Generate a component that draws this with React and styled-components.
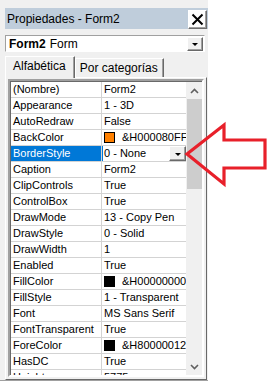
import styled, { createGlobalStyle } from 'styled-components'

const Global = createGlobalStyle`
  html, body { margin: 0; background: #fff; }
  body { font-family: "Liberation Sans", Arial, sans-serif; }
`

const Page = styled.div`
  position: relative;
  width: 274px;
  height: 382px;
  overflow: hidden;
`

const Window = styled.div`
  width: 208px;
  height: 381px;
  box-sizing: border-box;
  padding: 8px 0 0 5px;
  background: #f0f0f0;
  border-bottom: 1px solid #a0a0a0;
  display: flex;
  flex-direction: column;
`

const TitleBar = styled.div`
  flex: none;
  height: 21px;
  background: #bfcddb;
  display: flex;
  align-items: center;
  justify-content: space-between;
  padding-left: 2px;
  font-size: 12px;
  color: #000;
`

const CloseButton = styled.div`
  width: 19px;
  height: 19px;
  margin: 2px 1px 0 0;
  box-sizing: border-box;
  background: #fdfdfd;
  border: 1px solid;
  border-color: #fff #6d6d6d #6d6d6d #fff;
  box-shadow: inset -1px -1px 0 #a0a0a0;
  display: flex;
  align-items: center;
  justify-content: center;
`

const Combo = styled.div`
  flex: none;
  margin-top: 6px;
  width: 200px;
  height: 17px;
  box-sizing: border-box;
  background: #fff;
  border: 1px solid;
  border-color: #a0a0a0 #fff #fff #a0a0a0;
  display: flex;
  align-items: center;
  padding-left: 3px;
  font-size: 12px;
  b { margin-right: 4px; }
`

const ComboText = styled.span`
  flex: 1;
`

const DropButton = styled.div`
  width: 16px;
  height: 14px;
  margin-right: 1px;
  box-sizing: border-box;
  background: #f0f0f0;
  border: 1px solid;
  border-color: #fff #696969 #696969 #fff;
  box-shadow: inset -1px -1px 0 #a0a0a0;
  display: flex;
  align-items: center;
  justify-content: center;
  &::after {
    content: '';
    border-left: 3px solid transparent;
    border-right: 3px solid transparent;
    border-top: 3px solid #000;
    margin-top: 2px;
  }
`

const Tabs = styled.div`
  flex: none;
  margin-top: 3px;
  height: 22px;
  display: flex;
  align-items: flex-end;
  font-size: 12px;
`

const Tab = styled.div`
  box-sizing: border-box;
  height: ${p => (p.$active ? '22px' : '19px')};
  padding: ${p => (p.$active ? '0 8px 3px 7px' : '0 5px 0 4px')};
  display: flex;
  align-items: center;
  border: 1px solid;
  border-bottom: none;
  border-color: #fff #696969 transparent #fff;
  box-shadow: inset -1px 0 0 #a0a0a0;
  background: #f0f0f0;
  position: relative;
  z-index: ${p => (p.$active ? 1 : 0)};
  margin-bottom: ${p => (p.$active ? '-1px' : '0')};
`

const TabPage = styled.div`
  flex: 1;
  min-height: 0;
  width: 202px;
  box-sizing: border-box;
  border: 1px solid;
  border-color: #fff #696969 #696969 #fff;
  padding: 1px 2px 2px 2px;
  display: flex;
`

const Grid = styled.div`
  flex: 1;
  min-height: 0;
  display: flex;
  border: 2px solid;
  border-color: #a0a0a0 #fff #fff #a0a0a0;
  box-shadow: inset 1px 1px 0 #696969;
  padding: 1px 0 0 1px;
  overflow: hidden;
`

const Rows = styled.div`
  flex: 1;
  overflow: hidden;
  background: #fff;
  font-size: 11px;
`

const Row = styled.div`
  display: grid;
  grid-template-columns: 91px 1fr;
  height: 16px;
  box-sizing: border-box;
  border-bottom: 1px solid #d3d3d3;
  line-height: 15px;
`

const Name = styled.div`
  padding-left: 2px;
  border-right: 1px solid #d3d3d3;
  white-space: nowrap;
  overflow: hidden;
  background: ${p => (p.$selected ? '#0078d7' : '#fff')};
  color: ${p => (p.$selected ? '#fff' : '#000')};
`

const Value = styled.div`
  display: flex;
  align-items: center;
  padding-left: 2px;
  white-space: nowrap;
  overflow: hidden;
  box-shadow: ${p => (p.$editing ? 'inset 1px 0 0 #0078d7' : 'none')};
`

const ValueText = styled.span`
  flex: 1;
`

const Swatch = styled.span`
  flex: none;
  width: 9px;
  height: 9px;
  margin-right: 7px;
  border: 1px solid #000;
  background: ${p => p.$color};
`

const CellButton = styled(DropButton)`
  width: 17px;
  height: 15px;
  margin: 0 0 0 auto;
  flex: none;
`

const Scrollbar = styled.div`
  width: 16px;
  background: #f0f0f0;
  display: flex;
  flex-direction: column;
  align-items: center;
`

const Arrow = styled.div`
  flex: none;
  height: 17px;
  width: 16px;
  display: flex;
  align-items: center;
  justify-content: center;
`

const Thumb = styled.div`
  flex: none;
  width: 15px;
  height: 90px;
  background: #cdcdcd;
`

const Track = styled.div`
  flex: 1;
`

const Callout = styled.svg`
  position: absolute;
  left: 180px;
  top: 118px;
`

const rows = [
  ['(Nombre)', 'Form2'],
  ['Appearance', '1 - 3D'],
  ['AutoRedraw', 'False'],
  ['BackColor', '&H000080FF&', '#ff8000'],
  ['BorderStyle', '0 - None'],
  ['Caption', 'Form2'],
  ['ClipControls', 'True'],
  ['ControlBox', 'True'],
  ['DrawMode', '13 - Copy Pen'],
  ['DrawStyle', '0 - Solid'],
  ['DrawWidth', '1'],
  ['Enabled', 'True'],
  ['FillColor', '&H00000000&', '#000'],
  ['FillStyle', '1 - Transparent'],
  ['Font', 'MS Sans Serif'],
  ['FontTransparent', 'True'],
  ['ForeColor', '&H80000012&', '#000'],
  ['HasDC', 'True'],
  ['Height', '5775'],
]

const Chevron = ({ down }) => (
  <svg width="9" height="6" viewBox="0 0 9 6">
    <path
      d={down ? 'M1 1 L4.5 4.5 L8 1' : 'M1 5 L4.5 1.5 L8 5'}
      fill="none"
      stroke="#606060"
      strokeWidth="1.6"
    />
  </svg>
)

export default function App() {
  return (
    <Page>
      <Global />
      <Window>
        <TitleBar>
          Propiedades - Form2
          <CloseButton>
            <svg width="13" height="13" viewBox="0 0 13 13">
              <path d="M1.5 1.5 L11.5 11.5 M11.5 1.5 L1.5 11.5" stroke="#000" strokeWidth="2" />
            </svg>
          </CloseButton>
        </TitleBar>
        <Combo>
          <ComboText>
            <b>Form2</b>Form
          </ComboText>
          <DropButton />
        </Combo>
        <Tabs>
          <Tab $active>Alfabética</Tab>
          <Tab>Por categorías</Tab>
        </Tabs>
        <TabPage>
          <Grid>
            <Rows>
              {rows.map(([name, value, color]) => {
                const selected = name === 'BorderStyle'
                return (
                  <Row key={name}>
                    <Name $selected={selected}>{name}</Name>
                    <Value $editing={selected}>
                      {color && <Swatch $color={color} />}
                      <ValueText>{value}</ValueText>
                      {selected && <CellButton />}
                    </Value>
                  </Row>
                )
              })}
            </Rows>
            <Scrollbar>
              <Arrow><Chevron /></Arrow>
              <Thumb />
              <Track />
              <Arrow><Chevron down /></Arrow>
            </Scrollbar>
          </Grid>
        </TabPage>
      </Window>
      <Callout width="90" height="70" viewBox="180 118 90 70">
        <path
          d="M187 154 L224 125 L224 140 L265 140 L265 168 L224 168 L224 184 Z"
          fill="none"
          stroke="#e8202a"
          strokeWidth="3.2"
          strokeLinejoin="miter"
        />
      </Callout>
    </Page>
  )
}
